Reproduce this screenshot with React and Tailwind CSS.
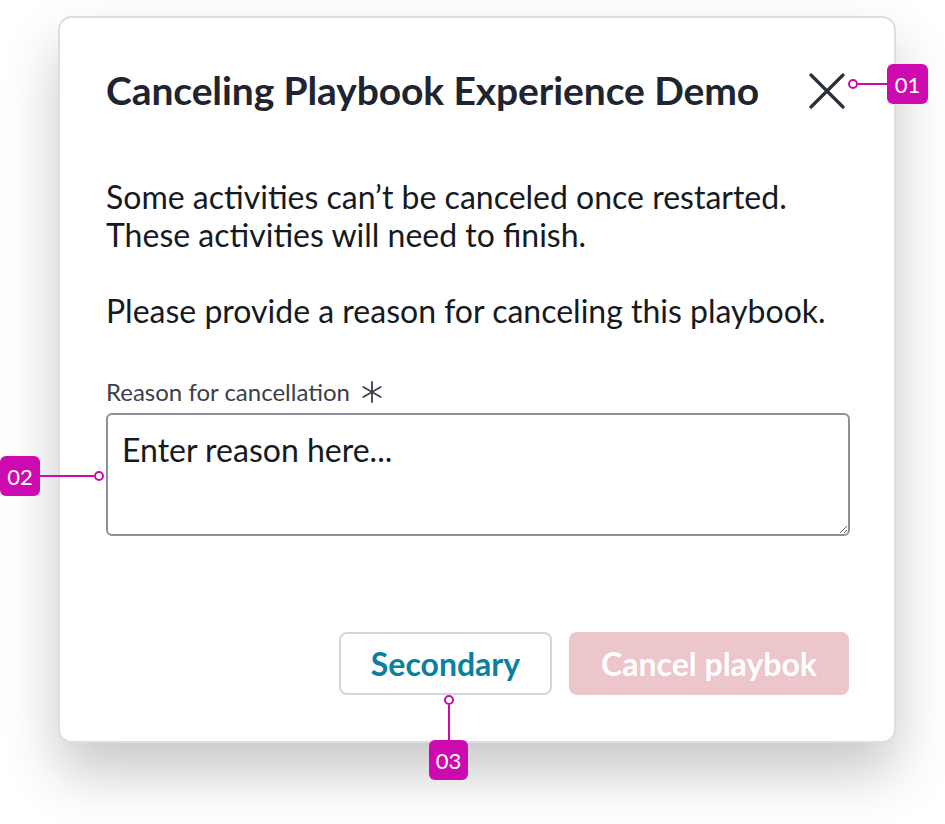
export default function App() {
  return (
    <div
      className="relative w-[945px] h-[824px] bg-white overflow-hidden"
      style={{ fontFamily: "Lato, 'Open Sans', sans-serif" }}
    >
      <div className="pt-[16px] pl-[58px]">
        <div className="relative w-[838px] h-[727px] rounded-[14px] border-2 border-[#dcdee3] bg-white shadow-[0_30px_55px_rgba(0,0,0,0.22)] pl-[46px] pr-[45px] pt-[48px] flex flex-col">
          <div className="flex items-center justify-between">
            <h1 className="text-[39px] leading-[48px] font-bold text-[#1e2430] tracking-[-0.1px]">
              Canceling Playbook Experience Demo
            </h1>
            <button className="w-[40px] h-[40px] flex items-center justify-center mr-[2px] mt-[2px]">
              <svg width="36" height="36" viewBox="0 0 36 36" fill="none">
                <path d="M2 2L34 34M34 2L2 34" stroke="#2b303b" strokeWidth="3.2" strokeLinecap="round" />
              </svg>
            </button>
          </div>

          <div className="mt-[64px] text-[32px] leading-[38px] text-[#151a22]">
            <p>Some activities can’t be canceled once restarted.</p>
            <p>These activities will need to finish.</p>
            <p className="mt-[38px]">Please provide a reason for canceling this playbook.</p>
          </div>

          <label className="mt-[48px] flex items-center gap-[11px] text-[24px] leading-[28px] text-[#3b404b]">
            Reason for cancellation
            <svg width="22" height="22" viewBox="0 0 22 22" fill="none">
              <path d="M11 1V21M2.3 6L19.7 16M2.3 16L19.7 6" stroke="#3b404b" strokeWidth="1.8" strokeLinecap="round" />
            </svg>
          </label>
          <textarea
            className="mt-[7px] w-[744px] h-[123px] rounded-[6px] border-2 border-[#8b909a] px-[14px] py-[16px] text-[32px] leading-[38px] text-[#151a22] placeholder:text-[#151a22] outline-none resize-y"
            placeholder="Enter reason here..."
          />

          <div className="mt-[96px] flex justify-end gap-[17px]">
            <button className="w-[213px] h-[63px] rounded-[8px] border-2 border-[#d0d6db] bg-white text-[32px] font-bold text-[#0b7f9f]">
              Secondary
            </button>
            <button className="w-[280px] h-[63px] rounded-[8px] bg-[#ecc6ca] text-[32px] font-bold text-white">
              Cancel playbok
            </button>
          </div>
        </div>
      </div>

      {/* callout 01 */}
      <div className="absolute left-[848px] top-[79px] flex items-center">
        <span className="w-[10px] h-[10px] rounded-full border-2 border-[#cc0aaf] bg-white" />
        <span className="w-[30px] h-[2px] bg-[#cc0aaf]" />
      </div>
      <div className="absolute left-[887px] top-[64px] w-[41px] h-[40px] rounded-[6px] bg-[#cc0aaf] text-white text-[22px] flex items-center justify-center">
        01
      </div>

      {/* callout 02 */}
      <div className="absolute left-[0px] top-[456px] w-[40px] h-[40px] rounded-[6px] bg-[#cc0aaf] text-white text-[22px] flex items-center justify-center">
        02
      </div>
      <div className="absolute left-[40px] top-[471px] flex items-center">
        <span className="w-[54px] h-[2px] bg-[#cc0aaf]" />
        <span className="w-[10px] h-[10px] rounded-full border-2 border-[#cc0aaf] bg-white" />
      </div>

      {/* callout 03 */}
      <div className="absolute left-[444px] top-[695px] flex flex-col items-center">
        <span className="w-[10px] h-[10px] rounded-full border-2 border-[#cc0aaf] bg-white" />
        <span className="w-[2px] h-[36px] bg-[#cc0aaf]" />
      </div>
      <div className="absolute left-[429px] top-[740px] w-[39px] h-[40px] rounded-[6px] bg-[#cc0aaf] text-white text-[22px] flex items-center justify-center">
        03
      </div>
    </div>
  );
}
